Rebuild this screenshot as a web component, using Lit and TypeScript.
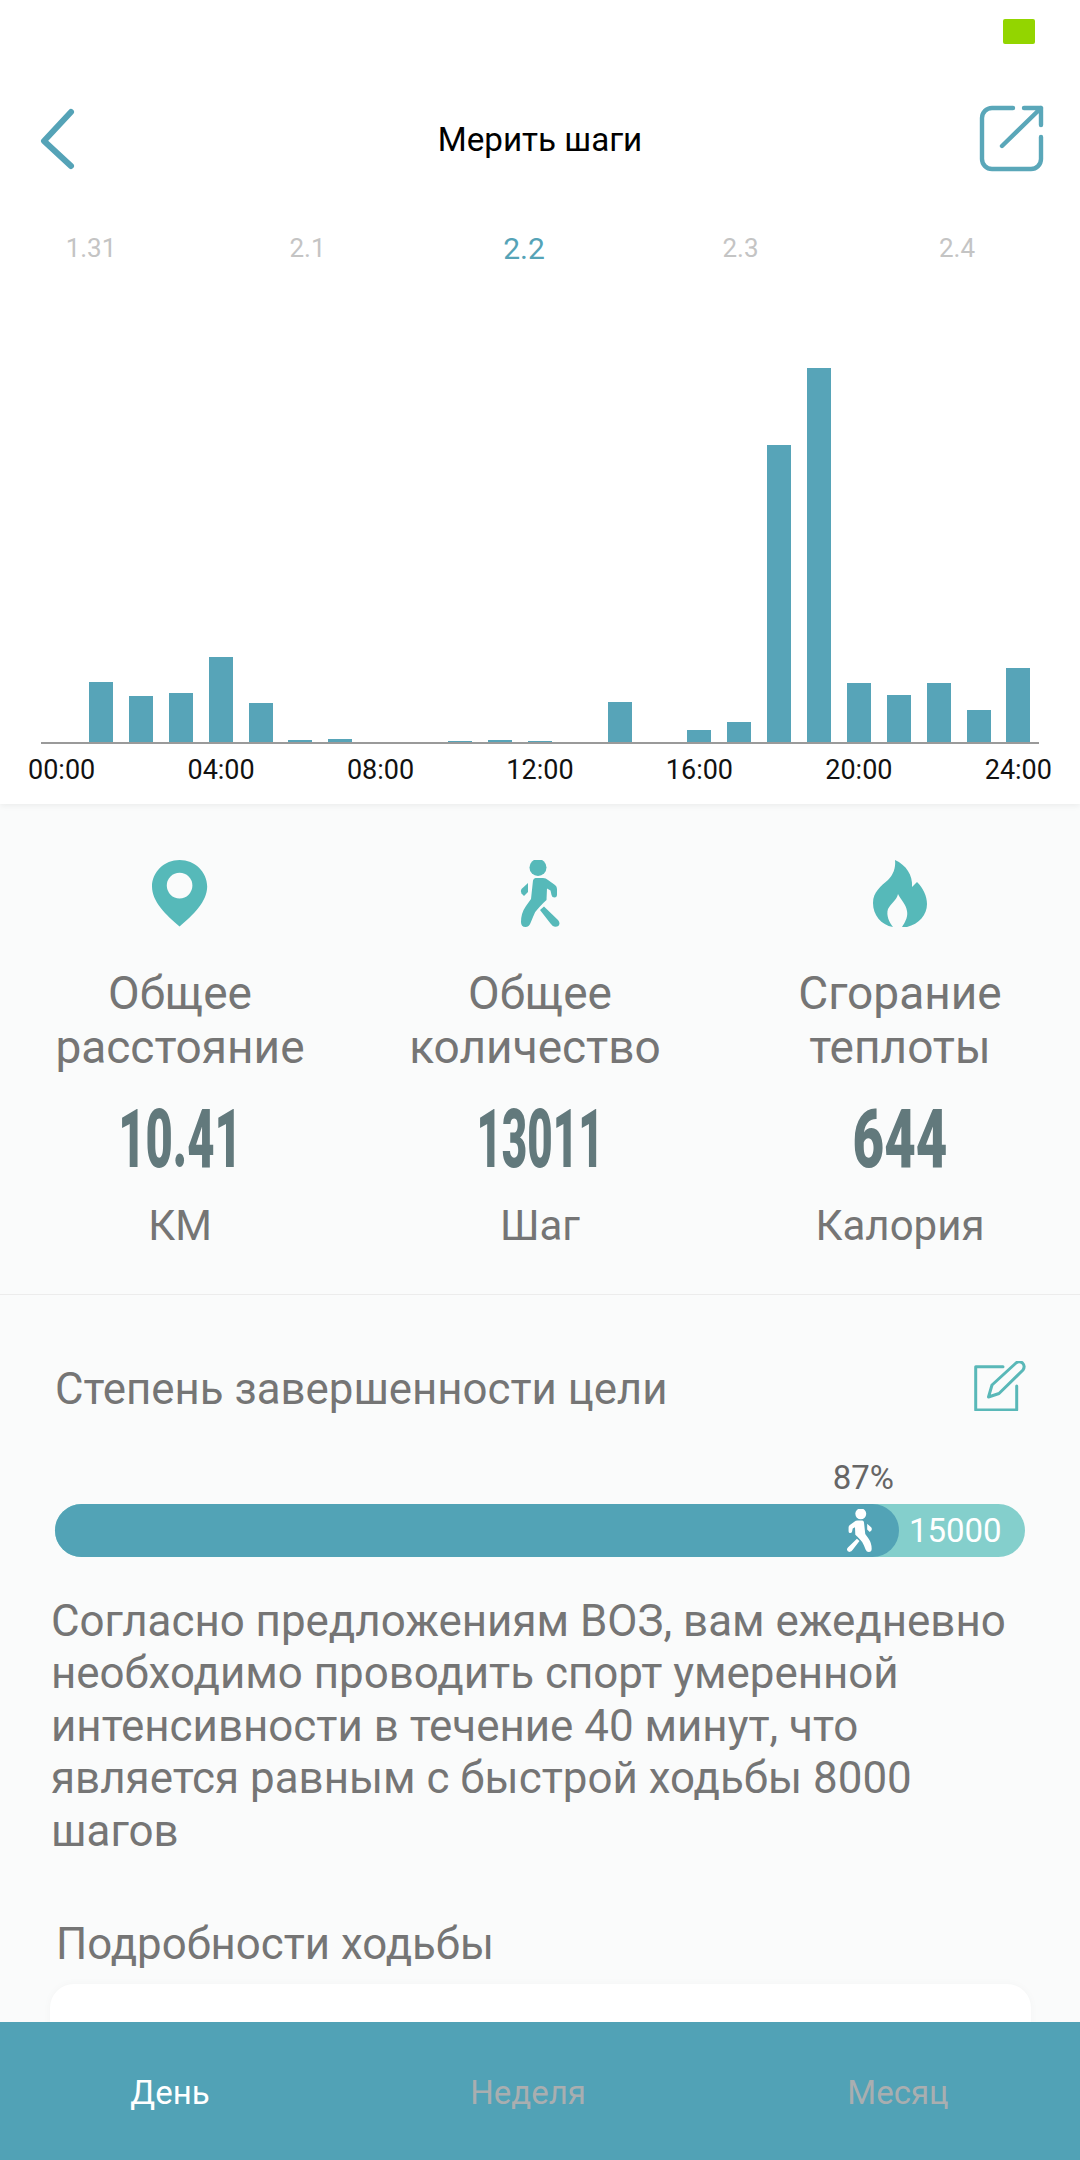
import { LitElement, css, html, svg } from 'lit';
import { customElement, state } from 'lit/decorators.js';

const dates = ['1.31', '2.1', '2.2', '2.3', '2.4'];
const hourBars = [60, 46, 49, 85, 39, 2, 3, 0, 0, 1, 2, 1, 0, 40, 0, 12, 20, 297, 374, 59, 47, 59, 32, 74];
const hours = ['00:00', '04:00', '08:00', '12:00', '16:00', '20:00', '24:00'];

const walkerPaths = svg`
  <circle cx="38" cy="17.5" r="8.5"></circle>
  <path d="M35.5 28 H43 Q46 28 48 30 L55 35 Q57 36.5 57 39 L57 44.5 Q57 47.5 54.5 47.5 Q52 47.5 51.5 45 L50.5 40.5 L47 38.5 L46.5 50 Q43 53 39.5 57 Q35 61 33 67 L30.5 73 Q29 77 25.5 77 Q21 77 21 72 Q21 63 26 56 L31 49 L33 30.5 Q33.5 28 35.5 28 Z"></path>
  <path d="M28 33 L21.5 39 Q20 41 21.5 43.5 L24 46 L28 42 Z"></path>
  <path d="M44 56.5 L40 60 L50.5 73.5 Q52.5 76.5 55 76.8 Q59 77 59.5 73.5 Q59.5 71.5 58 70 Z"></path>
`;

@customElement('app-root')
export class AppRoot extends LitElement {
  static styles = css`
    :host {
      display: block;
      font-family: Roboto, 'Noto Sans', sans-serif;
      color: #757575;
    }

    .page {
      height: 2160px;
      width: 1080px;
      display: flex;
      flex-direction: column;
      overflow: hidden;
      background: #fafbfb;
    }

    .scroll {
      flex: 1;
      min-height: 0;
      overflow: hidden;
    }

    .top {
      background: #fff;
      height: 804px;
      box-shadow: 0 2px 6px rgba(0, 0, 0, 0.06);
      position: relative;
    }

    .status {
      height: 70px;
      display: flex;
      justify-content: flex-end;
      padding: 19px 45px 0 0;
      box-sizing: border-box;
    }

    .battery {
      width: 32px;
      height: 25px;
      background: #93d500;
      border-radius: 2px;
    }

    .header {
      height: 140px;
      display: grid;
      grid-template-columns: 1fr auto 1fr;
      align-items: center;
      padding: 0 34px 0 38px;
    }

    .title {
      font-size: 33.2px;
      margin: 0 4px 2px 0;
      color: #000;
    }

    .back {
      width: 40px;
      height: 64px;
      fill: none;
      stroke: #55a3b7;
      stroke-width: 6;
      stroke-linecap: round;
      stroke-linejoin: round;
    }

    .share {
      width: 70px;
      height: 70px;
      justify-self: end;
      margin-bottom: 6px;
      fill: none;
      stroke: #5aa7b9;
      stroke-width: 4.4;
      stroke-linecap: round;
      stroke-linejoin: round;
    }

    .dates {
      height: 76px;
      display: grid;
      grid-template-columns: repeat(5, 216.5px);
      justify-content: center;
      padding: 0 32px 0 0;
      align-items: center;
      text-align: center;
      font-size: 26px;
      color: #c4c4c4;
    }

    .dates .active {
      font-size: 30px;
      color: #55a3b7;
    }

    .chart {
      height: 458px;
      box-sizing: border-box;
      margin-left: 41px;
      width: 998px;
      padding-left: 48px;
      display: flex;
      align-items: flex-end;
      gap: 15.9px;
      border-bottom: 2px solid #9a9a9a;
    }

    .bar {
      width: 24px;
      background: #57a4b8;
    }

    .hours {
      display: flex;
      justify-content: space-between;
      padding: 10px 28px 0 28px;
      font-size: 27px;
      color: #111;
    }

    .stats {
      display: grid;
      grid-template-columns: repeat(3, 360px);
      padding: 56px 0 41px;
      border-bottom: 1px solid #ececec;
      text-align: center;
    }

    .stat-icon {
      height: 67px;
      display: block;
      margin: 0 auto 39px;
      fill: #56b9b9;
    }

    .stat-label {
      font-size: 46px;
      line-height: 54px;
    }

    .shift {
      display: inline-block;
      margin-right: 10px;
    }

    .stat-value {
      display: block;
      margin-top: 25px;
      font-size: 82px;
      font-weight: 900;
      line-height: 80px;
      color: #62797c;
      transform: scaleX(0.575);
    }

    .stat-value.tight {
      transform: scaleX(0.535);
    }

    .stat-value.wide {
      transform: scaleX(0.665);
    }

    .stat-unit {
      margin-top: 20px;
      font-size: 42px;
      line-height: 54px;
    }

    .goal {
      padding: 66px 55px 0;
    }

    .goal-head {
      height: 50px;
      display: flex;
      justify-content: space-between;
      align-items: flex-start;
    }

    .goal-title {
      font-size: 43.8px;
      line-height: 50px;
      padding-top: 3px;
    }

    .edit {
      width: 53px;
      height: 50px;
      margin-right: -1px;
      fill: none;
      stroke: #59b8b8;
      stroke-width: 3;
      stroke-linecap: round;
      stroke-linejoin: round;
    }

    .percent {
      margin-top: 49px;
      padding-right: 5px;
      box-sizing: border-box;
      text-align: right;
      font-size: 33px;
      line-height: 36px;
      color: #666;
    }

    .track {
      margin-top: 8px;
      height: 53px;
      border-radius: 27px;
      background: #84cfcc;
      display: flex;
      align-items: center;
    }

    .fill {
      height: 53px;
      border-radius: 27px;
      background: #52a3b6;
      display: flex;
      align-items: center;
      justify-content: flex-end;
      padding-right: 26px;
      box-sizing: border-box;
    }

    .fill svg {
      height: 43px;
      fill: #fff;
      transform: scaleX(-1);
    }

    .target {
      padding-left: 10px;
      font-size: 33px;
      color: #fff;
    }

    .advice {
      margin: 38px 0 0 -4px;
      width: 980px;
      font-size: 43.9px;
      line-height: 52.4px;
    }

    .details {
      margin: 62px 0 0 56px;
      font-size: 43.8px;
      line-height: 50px;
    }

    .card {
      margin: 15px 0 0 50px;
      width: 981px;
      height: 200px;
      border-radius: 24px;
      background: #fff;
      box-shadow: 0 0 8px rgba(0, 0, 0, 0.03);
    }

    .tabs {
      height: 138px;
      flex: none;
      box-sizing: border-box;
      padding-top: 2px;
      display: grid;
      grid-template-columns: 340px 376px 364px;
      align-items: center;
      text-align: center;
      background: #51a2b6;
      font-size: 33px;
      color: #a9aeb0;
    }

    .tabs .active {
      color: #fff;
    }
  `;

  @state() private percent = 87;

  render() {
    return html`
      <div class="page">
        <div class="scroll">
          <div class="top">
            <div class="status"><div class="battery"></div></div>
            <div class="header">
              <svg class="back" viewBox="0 0 40 64"><path d="M33 5 L6 34 L33 59" transform="translate(0 -1)"></path></svg>
              <div class="title">Мерить шаги</div>
              <svg class="share" viewBox="16 12 70 70">
                <path d="M53 18 H32 a10 10 0 0 0 -10 10 V69 a10 10 0 0 0 10 10 H71 a10 10 0 0 0 10 -10 V47"></path>
                <path d="M64 18 H81 V35 M81 18 L42 56"></path>
              </svg>
            </div>
            <div class="dates">
              ${dates.map((d) => html`<span class=${d === '2.2' ? 'active' : ''}>${d}</span>`)}
            </div>
            <div class="chart">
              ${hourBars.map((h) => html`<div class="bar" style="height:${h}px"></div>`)}
            </div>
            <div class="hours">${hours.map((h) => html`<span>${h}</span>`)}</div>
          </div>

          <div class="stats">
            <div>
              <svg class="stat-icon" viewBox="0 0 56 68">
                <path fill-rule="evenodd" d="M28 0 C12.5 0 0 12 0 27 C0 42 14 56 28 67.5 C42 56 56 42 56 27 C56 12 43.5 0 28 0 Z M28 13 A13 13 0 1 1 28 39 A13 13 0 1 1 28 13 Z"></path>
              </svg>
              <div class="stat-label">Общее<br />расстояние</div>
              <span class="stat-value">10.41</span>
              <div class="stat-unit">КМ</div>
            </div>
            <div>
              <svg class="stat-icon" viewBox="19 10 42 67">${walkerPaths}</svg>
              <div class="stat-label">Общее<br /><span class="shift">количество</span></div>
              <span class="stat-value tight">13011</span>
              <div class="stat-unit">Шаг</div>
            </div>
            <div>
              <svg class="stat-icon" viewBox="22 10 56 67">
                <path d="M45 10 C56 15 63 25 62 37 L67 32 C73 38 77 46 77 54 C77 65 69 74 57 77 C52 77 52 77 52 77 C56 71 58 66 57 61 C56 54 51 50 48 44 C47 50 41 53 38 59 C36 65 39 72 43 77 C31 75 23 65 23 53 C23 42 31 36 38 30 C43 25 46 18 45 10 Z"></path>
              </svg>
              <div class="stat-label">Сгорание<br />теплоты</div>
              <span class="stat-value wide">644</span>
              <div class="stat-unit">Калория</div>
            </div>
          </div>

          <div class="goal">
            <div class="goal-head">
              <div class="goal-title">Степень завершенности цели</div>
              <svg class="edit" viewBox="13 11 53 50">
                <path d="M43 16.7 H15.7 V60 H56.7 V36"></path>
                <path d="M28.5 47 L32 35 L56 13 Q59 10.5 62.5 13 Q65.5 16 63 20 L39 43.5 Z"></path>
              </svg>
            </div>
            <div class="percent" style="width:${this.percent}%">${this.percent}%</div>
            <div class="track">
              <div class="fill" style="width:${this.percent}%">
                <svg viewBox="19 10 42 67">${walkerPaths}</svg>
              </div>
              <span class="target">15000</span>
            </div>
            <div class="advice">Согласно предложениям ВОЗ, вам ежедневно необходимо проводить спорт умеренной интенсивности в течение 40 минут, что является равным с быстрой ходьбы 8000 шагов</div>
          </div>

          <div class="details">Подробности ходьбы</div>
          <div class="card"></div>
        </div>

        <div class="tabs">
          <span class="active">День</span>
          <span>Неделя</span>
          <span>Месяц</span>
        </div>
      </div>
    `;
  }
}
